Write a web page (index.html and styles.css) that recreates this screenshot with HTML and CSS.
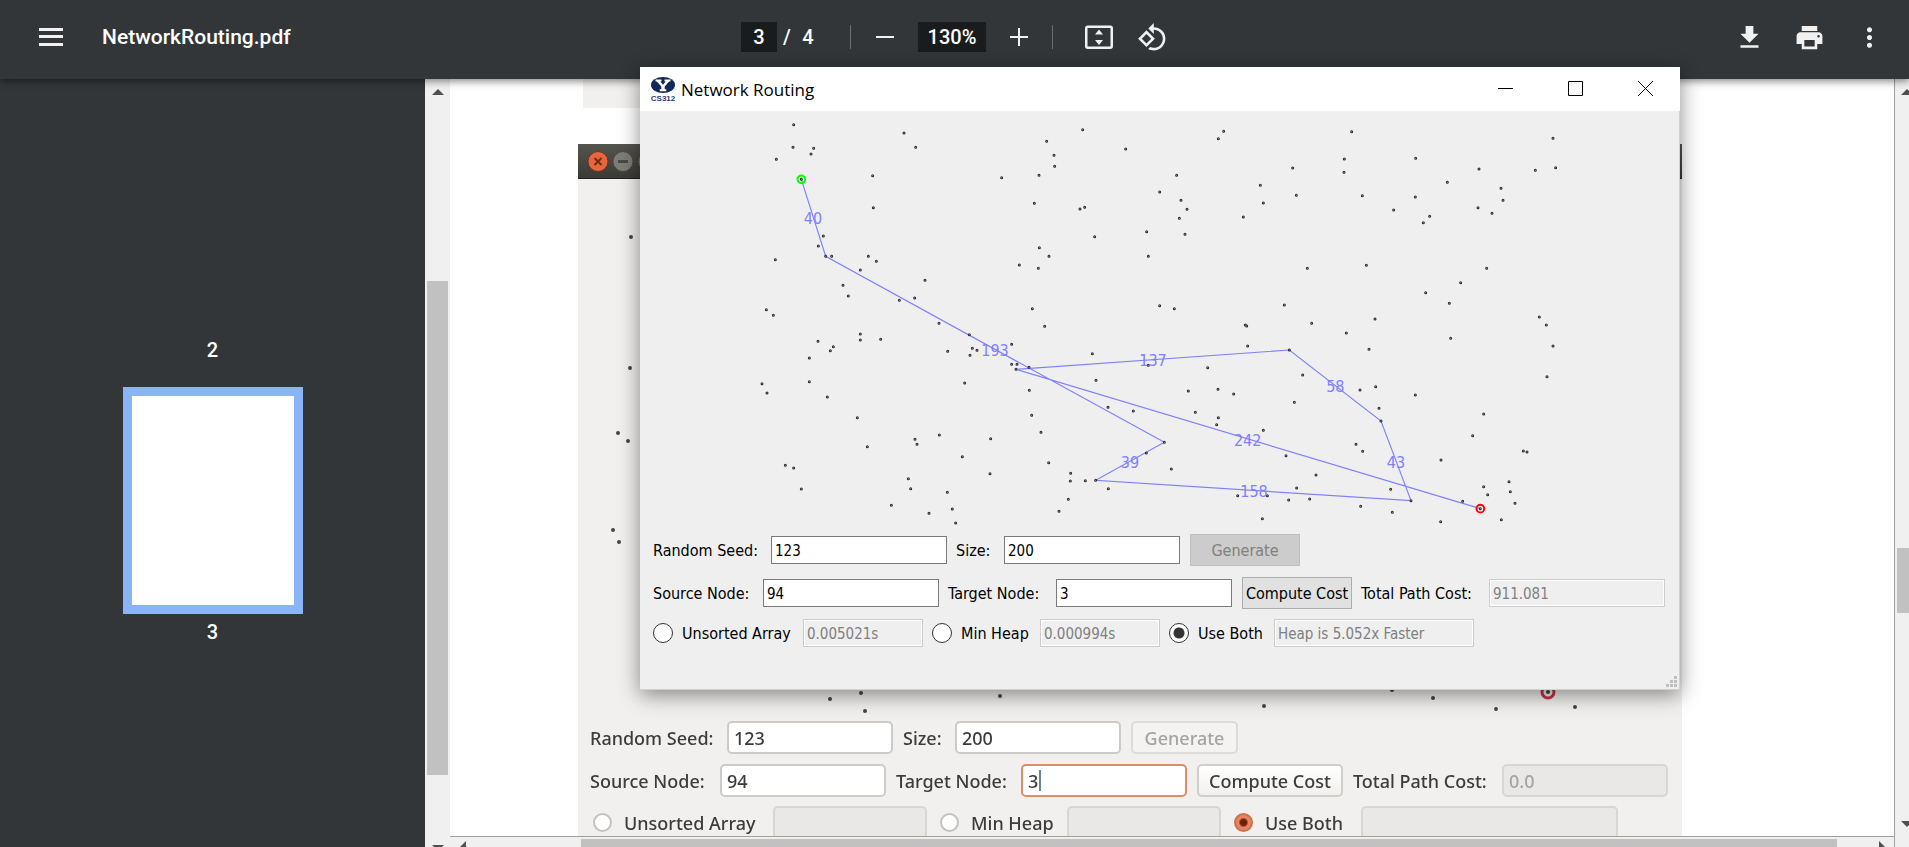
FILE: index.html
```html
<!DOCTYPE html>
<html lang="en">
<head>
<meta charset="utf-8">
<title>NetworkRouting.pdf</title>
<link rel="stylesheet" href="styles.css">
</head>
<body>
<header class="toolbar">
  <div class="toolbar-start">
    <button class="icon-btn" aria-label="Menu"><svg width="24" height="18" viewBox="0 0 24 18"><path d="M0 0h24v3H0zM0 7h24v3H0zM0 15h24v3H0z"/></svg></button>
    <span class="doc-title">NetworkRouting.pdf</span>
  </div>
  <div class="toolbar-center">
    <input class="dark-field page-field" aria-label="Page" value="3">
    <span class="slash">/</span><span class="page-total">4</span>
    <span class="divider divider-first"></span>
    <button class="icon-btn zoom-btn" aria-label="Zoom out"><svg width="18" height="18" viewBox="0 0 18 18"><path d="M0 8h18v2H0z"/></svg></button>
    <input class="dark-field zoom-field" aria-label="Zoom" value="130%">
    <button class="icon-btn zoom-btn" aria-label="Zoom in"><svg width="18" height="18" viewBox="0 0 18 18"><path d="M0 8h8V0h2v8h8v2h-8v8H8v-8H0z"/></svg></button>
    <span class="divider divider-last"></span>
    <button class="icon-btn view-btn fit-btn" aria-label="Fit to page"><svg width="28" height="24" viewBox="0 0 28 24"><rect class="outline" x="1.25" y="1.75" width="25.500" height="21" rx="1.500"/><path d="M14 4.500l4 5h-8zM14 20l4-5h-8z"/></svg></button>
    <button class="icon-btn view-btn" aria-label="Rotate counterclockwise"><svg width="31" height="31" viewBox="0 0 24 24"><path d="M7.340 6.410L.86 12.900l6.490 6.480 6.490-6.480-6.500-6.490zM3.690 12.900l3.660-3.660L11 12.900l-3.660 3.660-3.650-3.660zm15.670-6.260C17.610 4.880 15.300 4 13 4V.76L8.760 5 13 9.240V6c1.790 0 3.580.68 4.950 2.050 2.730 2.730 2.730 7.170 0 9.900C16.580 19.320 14.790 20 13 20c-.97 0-1.940-.21-2.840-.61l-1.490 1.490C10.020 21.620 11.510 22 13 22c2.300 0 4.610-.88 6.360-2.640 3.520-3.510 3.520-9.210 0-12.720z"/></svg></button>
  </div>
  <div class="toolbar-end">
    <button class="icon-btn end-btn" aria-label="Download"><svg width="31" height="31" viewBox="0 0 24 24"><path d="M19 9h-4V3H9v6H5l7 7 7-7zM5 18v2h14v-2H5z"/></svg></button>
    <button class="icon-btn end-btn" aria-label="Print"><svg width="31" height="31" viewBox="0 0 24 24"><path d="M19 8H5c-1.660 0-3 1.340-3 3v6h4v4h12v-4h4v-6c0-1.660-1.340-3-3-3zm-3 11H8v-5h8v5zm3-7c-.55 0-1-.45-1-1s.45-1 1-1 1 .45 1 1-.45 1-1 1zm-1-9H6v4h12V3z"/></svg></button>
    <button class="icon-btn end-btn" aria-label="More actions"><svg width="31" height="31" viewBox="0 0 24 24"><path d="M12 8c1.100 0 2-.9 2-2s-.9-2-2-2-2 .9-2 2 .9 2 2 2zm0 2c-1.100 0-2 .9-2 2s.9 2 2 2 2-.9 2-2-.9-2-2-2zm0 6c-1.100 0-2 .9-2 2s.9 2 2 2 2-.9 2-2-.9-2-2-2z"/></svg></button>
  </div>
</header>

<main class="workspace">
  <nav class="sidebar" aria-label="Pages">
    <span class="thumb-label">2</span>
    <div class="thumb"></div>
    <span class="thumb-label">3</span>
  </nav>
  <div class="vscroll">
    <svg class="arrow" width="12" height="6" viewBox="0 0 12 6"><path d="M6 0l6 6H0z"/></svg>
    <div class="vthumb"></div>
    <svg class="arrow arrow-low" width="12" height="6" viewBox="0 0 12 6"><path d="M0 0h12L6 6z"/></svg>
  </div>

  <section class="viewer">
    <div class="page">
      <div class="prev-figure"></div>
      <div class="figure">
        <div class="figure-bar">
          <svg width="80" height="35" viewBox="0 0 80 35"><circle cx="20" cy="17.500" r="10" fill="#e8663c" stroke="#6b3525"/><path d="M16.500 14l7 7m0-7l-7 7" stroke="#6e2c14" stroke-width="2"/><circle cx="45" cy="17.500" r="10" fill="#7d7c77" stroke="#4a4944"/><path d="M40 17.500h10" stroke="#4a4944" stroke-width="3"/><circle cx="70" cy="17.500" r="10" fill="#7d7c77" stroke="#4a4944"/></svg>
        </div>
        <div class="figure-body">
          <svg class="figure-plot" width="1104" height="542" viewBox="578 179 1104 542">
            <path class="old-dots" d="M631 237h0M630 368h0M618 433h0M628 441h0M613 530h0M619 542h0M830 699h0M861 693h0M865 711h0M1000 696h0M1264 706h0M1392 690h0M1433 698h0M1496 709h0M1575 707h0M1548 692h0"/>
            <circle class="old-target" cx="1548" cy="692" r="6"/>
          </svg>
          <form class="old-form">
            <div class="old-row">
              <label class="o137" for="oseed">Random Seed:</label><input class="o166" id="oseed" value="123">
              <label class="o52 g10" for="osize">Size:</label><input class="o166" id="osize" value="200">
              <button class="o107 g10" type="button" disabled>Generate</button>
            </div>
            <div class="old-row">
              <label class="o130" for="osrc">Source Node:</label><input class="o166" id="osrc" value="94">
              <label class="o125 g10" for="otgt">Target Node:</label><span class="focus-wrap"><input class="o166 focused" id="otgt" value="3"><i class="caret"></i></span>
              <button class="o146 g10" type="button">Compute Cost</button>
              <label class="o149 g10" for="ocost">Total Path Cost:</label><input class="o166" id="ocost" value="0.0" disabled>
            </div>
            <div class="old-row old-options">
              <label class="o183 old-option"><input type="radio" name="old">Unsorted Array</label><input class="o154" aria-label="Array time" disabled>
              <label class="o130 g10 old-option"><input type="radio" name="old">Min Heap</label><input class="o154" aria-label="Heap time" disabled>
              <label class="o130 g10 old-option"><input type="radio" name="old" checked>Use Both</label><input class="o257" aria-label="Speedup" disabled>
            </div>
          </form>
        </div>
      </div>
    </div>
    <div class="hscroll">
      <svg class="arrow harrow-left" width="6" height="10" viewBox="0 0 6 10"><path d="M6 4v6H0z"/></svg>
      <div class="hthumb"></div>
      <svg class="arrow harrow-right" width="6" height="10" viewBox="0 0 6 10"><path d="M0 4v6h6z"/></svg>
    </div>
  </section>
  <div class="rscroll">
    <svg class="arrow rarrow" width="12" height="6" viewBox="0 0 12 6"><path d="M6 0l6 6H0z"/></svg>
    <div class="rthumb"></div>
    <svg class="arrow rarrow rarrow-low" width="12" height="6" viewBox="0 0 12 6"><path d="M0 0h12L6 6z"/></svg>
  </div>
</main>

<section class="window" aria-label="Network Routing">
  <div class="window-bar">
    <svg class="logo" width="26" height="25" viewBox="-1 0 26 25"><ellipse cx="12" cy="8" rx="12" ry="8" fill="#13285a"/><path d="M4.500 2.500h6v2H9.200l2.800 3.300 2.800-3.300h-1.300v-2h6v2h-1.400L13.700 9.500v2.700h1.600v2H8.700v-2h1.600V9.500L5.900 4.500H4.500z" fill="#fff"/><text class="logo-text" x="12" y="24" text-anchor="middle">CS312</text></svg>
    <h1 class="window-title">Network Routing</h1>
    <div class="window-controls">
      <button aria-label="Minimize"><svg width="15" height="15" viewBox="0 0 15 15"><path d="M0 7.500h15"/></svg></button>
      <button aria-label="Maximize"><svg width="15" height="15" viewBox="0 0 15 15"><path d="M.5.5h14v14H.5z"/></svg></button>
      <button aria-label="Close"><svg width="15" height="15" viewBox="0 0 15 15"><path d="M0 0l15 15M15 0L0 15"/></svg></button>
    </div>
  </div>
  <svg class="plot" viewBox="-300 3 3120 1260">
    <path class="edges" d="M184 208L257 439 1273 997 1067 1111 2013 1172 1923 933 1648 720 828 778 2221 1196"/>
    <defs>
      <g id="dots">
        <path d="M161 44h0M159 112h0M221 115h0M213 132h0M109 148h0M184 208h0M492 69h0M527 112h0M398 197h0M400 293h0M250 378h0M235 408h0M257 439h0M275 439h0M106 449h0M385 439h0M409 454h0M361 480h0M309 526h0M325 558h0M79 599h0M100 616h0M478 571h0M524 564h0M555 511h0M785 203h0M920 94h0M942 136h0M944 169h0M897 196h0M883 280h0M1020 297h0M1034 292h0M1064 380h0M898 413h0M927 439h0M895 475h0M838 465h0M877 596h0M1028 59h0M1157 117h0M1220 365h0M1225 439h0M1259 246h0M1259 587h0"/>
        <path transform="translate(1260 0)" d="M191 64h0M175 86h0M50 196h0M63 271h0M81 298h0M58 325h0M75 373h0M43 596h0M301 226h0M310 279h0M250 321h0M398 174h0M409 256h0M442 475h0M373 585h0M575 65h0M553 147h0M552 187h0M607 257h0M619 466h0M645 627h0M767 145h0M766 261h0M701 300h0M809 319h0M790 338h0M862 217h0M957 177h0M954 293h0M996 310h0M1023 235h0M1029 271h0M1126 181h0M1187 173h0M1179 85h0M980 475h0M902 518h0M797 548h0M868 580h0M1138 621h0"/>
        <path transform="translate(0 630)" d="M361 42h0M361 60h0M422 58h0M234 64h0M280 80h0M271 92h0M208 114h0M208 185h0M66 191h0M81 219h0M262 231h0M352 293h0M382 380h0M136 436h0M161 444h0M184 507h0M597 10h0M623 94h0M688 44h0M697 85h0M711 91h0M690 106h0M815 73h0M815 133h0M831 133h0M828 148h0M867 142h0M914 19h0M1057 101h0M1225 136h0M1068 181h0M674 189h0M868 211h0M875 286h0M903 337h0M1104 262h0M1180 273h0M598 345h0M525 358h0M531 373h0M752 356h0M667 410h0M750 461h0M505 476h0M512 506h0M454 556h0M567 580h0M622 517h0M637 567h0M647 609h0M926 428h0M992 460h0M991 483h0M1036 482h0M1067 481h0M1105 506h0M985 538h0M957 574h0M1219 399h0"/>
        <path transform="translate(1260 630)" d="M256 15h0M260 18h0M263 78h0M388 90h0M455 10h0M559 39h0M627 88h0M143 143h0M174 208h0M221 222h0M85 213h0M106 277h0M175 293h0M170 314h0M310 331h0M403 247h0M428 165h0M600 210h0M647 200h0M657 265h0M663 303h0M766 225h0M588 373h0M608 394h0M378 407h0M468 465h0M410 504h0M386 540h0M449 537h0M233 527h0M322 527h0M307 596h0M34 447h0M13 367h0M692 508h0M753 542h0M602 559h0M697 577h0M842 605h0M843 420h0M938 347h0M971 282h0M872 55h0M1159 15h0M1179 78h0M1161 170h0M1090 393h0M1101 396h0M971 500h0M983 524h0M1047 485h0M1051 515h0M1065 550h0M1024 599h0M908 544h0M961 566h0"/>
      </g>
    </defs>
    <use href="#dots" class="dot-outer"/>
    <use href="#dots" class="dot-inner"/>
    <circle class="source" cx="184" cy="208" r="11.500"/>
    <circle class="target" cx="2221" cy="1196" r="11.500"/>
    <g class="costs">
      <text x="219" y="342">40</text><text x="765" y="738">193</text><text x="1239" y="768">137</text>
      <text x="1786" y="846">58</text><text x="1523" y="1008">242</text><text x="1170" y="1074">39</text>
      <text x="1968" y="1074">43</text><text x="1542" y="1161">158</text>
    </g>
  </svg>
  <form class="controls">
    <div class="row">
      <label class="w118" for="seed">Random Seed:</label><input id="seed" value="123">
      <label class="w48 next" for="size">Size:</label><input id="size" value="200">
      <button type="button" disabled>Generate</button>
    </div>
    <div class="row">
      <label class="w110" for="src">Source Node:</label><input id="src" value="94">
      <label class="w108 next" for="tgt">Target Node:</label><input id="tgt" value="3">
      <button type="button">Compute Cost</button>
      <label class="w128 next" for="cost">Total Path Cost:</label><input id="cost" value="911.081" disabled>
    </div>
    <div class="row row-options">
      <label class="w150 option"><input type="radio" name="mode">Unsorted Array</label><input class="w120" aria-label="Array time" value="0.005021s" disabled>
      <label class="w108 next option"><input type="radio" name="mode">Min Heap</label><input class="w120" aria-label="Heap time" value="0.000994s" disabled>
      <label class="w105 next option"><input type="radio" name="mode" checked>Use Both</label><input class="w200" aria-label="Speedup" value="Heap is 5.052x Faster" disabled>
    </div>
  </form>
  <svg class="grip" width="11" height="11" viewBox="0 0 11 11"><path d="M8 0h3v3H8zM4 4h3v3H4zM8 4h3v3H8zM0 8h3v3H0zM4 8h3v3H4zM8 8h3v3H8z"/></svg>
</section>
</body>
</html>
```

FILE: styles.css
```css
* { box-sizing: border-box; }
body {
  margin: 0;
  height: 100vh;
  display: flex;
  flex-direction: column;
  overflow: hidden;
  position: relative;
  background: #fff;
  font-family: Roboto, sans-serif;
}
button, input { font: inherit; margin: 0; padding: 0; border: 0; border-radius: 0; }
svg { display: block; }

/* Viewer toolbar */
.toolbar {
  flex: none;
  height: 79px;
  padding: 0 10px 5px;
  display: grid;
  grid-template-columns: 1fr auto 1fr;
  align-items: center;
  background: #323639;
  color: #fff;
  font-size: 20px;
  font-weight: 500;
  position: relative;
  z-index: 1;
  box-shadow: 0 2px 8px rgba(0, 0, 0, .5);
}
.toolbar-start, .toolbar-center, .toolbar-end { display: flex; align-items: center; }
.toolbar-start { gap: 39px; padding-left: 29px; }
.toolbar-end { justify-content: flex-end; }
.doc-title { font-size: 21px; }
.icon-btn { display: flex; align-items: center; justify-content: center; background: none; }
.icon-btn svg { fill: #f1f1f1; }
.icon-btn .outline { fill: none; stroke: #f1f1f1; stroke-width: 2.5; }
.dark-field { height: 30px; background: #191b1c; color: #fff; text-align: center; }
.page-field { width: 36px; }
.slash { width: 20px; text-align: center; }
.page-total { width: 22px; text-align: center; }
.divider { width: 1px; height: 24px; background: #6a6d70; }
.divider-first { margin: 0 19px 0 31px; }
.divider-last { margin: 0 30px 0 18px; }
.zoom-btn { width: 30px; }
.zoom-field { width: 68px; margin: 0 18px; }
.view-btn { width: 31px; height: 31px; }
.fit-btn { margin-right: 23px; }
.end-btn { width: 60px; }

/* Thumbnails and scroll bars */
.workspace { flex: 1; min-height: 0; display: flex; overflow: hidden; }
.sidebar {
  width: 425px;
  padding-top: 259px;
  background: #323639;
  color: #fff;
  font-size: 20px;
  font-weight: 500;
  line-height: 24px;
  display: flex;
  flex-direction: column;
  align-items: center;
}
.sidebar, .vscroll, .rscroll { flex: none; }
.thumb { width: 180px; height: 227px; margin: 25px 0 6px; background: #fff; border: 9px solid #8ab4f8; }
.arrow { fill: #505050; flex: none; }
.vscroll { width: 25px; padding: 10px 2px 0; background: #f0f0f0; display: flex; flex-direction: column; align-items: center; }
.vthumb { flex: none; width: 21px; height: 494px; margin-top: 186px; background: #c1c1c1; }
.arrow-low { margin-top: 70px; }
.rscroll { width: 15px; padding: 10px 0 0 2px; background: #f0f0f0; border-left: 1px solid #a0a0a0; overflow: hidden; }
.rarrow { margin-left: 4px; }
.rthumb { height: 65px; margin-top: 453px; background: #c1c1c1; }
.rarrow-low { margin-top: 208px; }
.hscroll { flex: none; height: 11px; display: flex; align-items: flex-end; background: #f0f0f0; border-top: 1px solid #a0a0a0; }
.harrow-left { margin-left: 10px; }
.hthumb { flex: 1; height: 8px; margin: 0 42px 0 115px; background: #c1c1c1; }
.harrow-right { margin-right: 9px; }

/* Document page */
.viewer { flex: 1; min-width: 0; display: flex; flex-direction: column; background: #fff; }
.page { flex: 1; min-height: 0; overflow: hidden; padding-left: 128px; }
.prev-figure { width: 1094px; height: 29px; margin: 0 0 36px 5px; background: #f1f0ee; }
.figure { width: 1104px; filter: blur(.6px); background: #f1f0ee; }
.figure-bar { height: 35px; background: linear-gradient(#55544f, #3b3a36); border-bottom: 1px solid #22211f; }
.old-dots { fill: none; stroke: #444; stroke-width: 4; stroke-linecap: round; }
.old-target { fill: none; stroke: #cf3048; stroke-width: 3; }
.old-form {
  padding: 0 12px;
  display: flex;
  flex-direction: column;
  gap: 10px;
  font-family: "Noto Sans", sans-serif;
  font-size: 18px;
  font-weight: 500;
  color: #3c3c3c;
}
.old-row { display: flex; align-items: center; height: 33px; white-space: nowrap; }
.old-row > * { flex: none; }
.old-row input:not([type=radio]) { height: 33px; padding: 0 5px; background: #fff; border: 2px solid #cdcac7; border-radius: 5px; color: #3c3c3c; }
.old-row input:not([type=radio]):disabled { background: #e9e8e6; border-color: #d8d6d3; color: #a5a4a2; }
.old-row input.focused:not([type=radio]) { border-color: #dd8c6d; }
.old-row button { height: 33px; background: linear-gradient(#fff, #f1f0ee); border: 2px solid #d0cdca; border-radius: 5px; color: #3c3c3c; }
.old-row button:disabled { background: #f4f3f1; border-color: #dddbd8; color: #a5a4a2; }
.focus-wrap { position: relative; }
.caret { position: absolute; left: 18px; top: 6px; width: 2px; height: 21px; background: #61898f; }
.old-option { display: flex; align-items: center; gap: 12px; padding-left: 3px; }
.old-option input { appearance: none; width: 19px; height: 19px; border: 2px solid #c4c1be; border-radius: 50%; background: #fff; }
.old-option input:checked { border-color: #d0704d; background: radial-gradient(circle, #6c210b 0 3px, #e98460 5px); }
.old-options { margin-top: -1px; }
.o52 { width: 52px; } .o107 { width: 107px; } .o125 { width: 125px; } .o130 { width: 130px; }
.o137 { width: 137px; } .o146 { width: 146px; } .o149 { width: 149px; } .o154 { width: 154px; }
.o166 { width: 166px; } .o183 { width: 183px; } .o257 { width: 257px; }
.g10 { margin-left: 10px; }

/* Application window lying over the document */
.window {
  position: absolute;
  left: 640px;
  top: 67px;
  z-index: 2;
  width: 1040px;
  padding-bottom: 43px;
  background: #efefef;
  box-shadow: inset -1px -1px #d0d0d0, 0 5px 20px rgba(0, 0, 0, .45);
}
.window-bar { height: 44px; padding-left: 10px; display: flex; align-items: center; background: #fff; }
.logo-text { font: bold 8px "Liberation Sans", sans-serif; fill: #2c3c68; }
.window-title { margin: 0 auto 0 5px; font: 400 17px "Open Sans", sans-serif; color: #000; }
.window-controls { display: flex; padding-bottom: 1px; }
.window-controls button { width: 70px; height: 43px; display: flex; align-items: center; justify-content: center; background: none; }
.window-controls svg { fill: none; stroke: #000; }
.plot { width: 100%; }
.edges { fill: none; stroke: #8080ff; stroke-width: 3.5; }
.dot-outer, .dot-inner { fill: none; stroke-linecap: round; }
.dot-outer { stroke: #2a2a2a; stroke-width: 9; }
.dot-inner { stroke: #aaa; stroke-width: 3; }
.source, .target { fill: none; stroke-width: 6; }
.source { stroke: #0f0; }
.target { stroke: #f00; }
.costs { font: 48px "DejaVu Sans Condensed", sans-serif; fill: #8080ff; text-anchor: middle; }
.controls {
  padding: 3px 13px 0;
  font-family: "DejaVu Sans Condensed", sans-serif;
  font-size: 16px;
  color: #000;
}
.row { display: flex; align-items: center; height: 32px; margin-bottom: 11px; white-space: nowrap; }
.row > * { flex: none; }
.row-options { height: 28px; margin: -1px 0 0; }
.row input:not([type=radio]) { width: 176px; height: 28px; padding: 2px 3px 0; font-size: 15px; background: #fff; border: 1px solid #7a7a7a; color: #000; }
.row input:not([type=radio]):disabled { background: #efefef; border-color: #ccc; box-shadow: inset 0 0 0 1px #fff; color: #808080; }
.row button { width: 110px; height: 32px; margin-left: 10px; background: #e1e1e1; border: 1px solid #adadad; color: #000; }
.row button:disabled { background: #ccc; border-color: #bfbfbf; color: #808080; }
.option { display: flex; align-items: center; gap: 9px; }
.option input { appearance: none; width: 20px; height: 20px; background: #fff; border: 1px solid #333; border-radius: 50%; }
.option input:checked { background: radial-gradient(circle, #333 0 5px, #fff 6px); }
.next { margin-left: 9px; }
.w48 { width: 48px; } .w105 { width: 105px; } .w108 { width: 108px; } .w110 { width: 110px; }
.w118 { width: 118px; } .w128 { width: 128px; } .w150 { width: 150px; }
.row input.w120:not([type=radio]) { width: 120px; }
.row input.w200:not([type=radio]) { width: 200px; }
.grip { position: absolute; right: 3px; bottom: 3px; fill: #bfbfbf; }
```
